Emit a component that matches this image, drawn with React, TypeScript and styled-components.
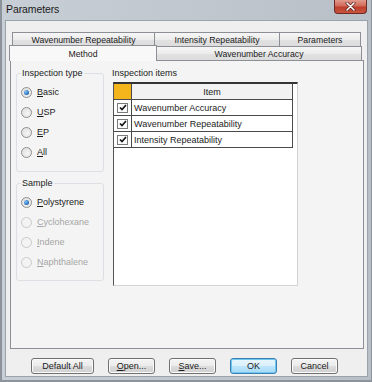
import React from "react";
import styled, { createGlobalStyle, css } from "styled-components";

const Global = createGlobalStyle`
  html, body { margin: 0; padding: 0; background: #c3c9d0; }
  * { box-sizing: border-box; }
  body { font-family: "Liberation Sans", Arial, sans-serif; font-size: 9px; color: #1b1b1b; }
`;

const Window = styled.div`
  width: 372px;
  height: 382px;
  display: flex;
  flex-direction: column;
  background: linear-gradient(90deg, #c8ced5 0%, #c0c6cd 60%, #b9bfc7 100%);
  border-left: 2px solid #8d939a;
  border-right: 1px solid #8d939a;
  border-bottom: 2px solid #8d939a;
  padding: 0 3px 3px 3px;
`;

const TitleBar = styled.div`
  height: 20px;
  flex: none;
  display: flex;
  align-items: flex-start;
  justify-content: space-between;
`;

const Title = styled.span`
  font-size: 10.5px;
  line-height: 19px;
  padding-left: 1px;
  color: #1a1a1a;
  letter-spacing: -0.1px;
`;

const CloseButton = styled.div`
  width: 33px;
  height: 14px;
  margin-right: 1px;
  border: 1px solid #6b2a24;
  border-top: none;
  border-radius: 0 0 4px 4px;
  background: linear-gradient(#e29a8c 0%, #d26a5a 45%, #bd3e2c 55%, #c9553f 100%);
  display: flex;
  align-items: center;
  justify-content: center;
`;

const Client = styled.div`
  flex: 1;
  display: flex;
  flex-direction: column;
  background: #efefef;
  border: 1px solid #9aa2ab;
  padding: 11px 3px 0 4px;
`;

const TabRow = styled.div<{ $indent: number }>`
  display: flex;
  align-items: flex-end;
  height: 14px;
  padding-left: ${(p) => p.$indent}px;
`;

const Tab = styled.div<{ $w: number; $active?: boolean }>`
  width: ${(p) => p.$w}px;
  height: 14px;
  flex: none;
  border: 1px solid #8c8f96;
  border-bottom: none;
  margin-right: -1px;
  background: linear-gradient(#f6f6f6 0%, #ececec 50%, #e2e2e2 51%, #dcdcdc 100%);
  display: flex;
  align-items: center;
  justify-content: center;
  white-space: nowrap;
  font-size: 8.7px;
  line-height: 12px;
  position: relative;
  ${(p) =>
    p.$active &&
    css`
      height: 16px;
      margin-bottom: -1px;
      margin-left: -1px;
      background: #f8f8f8;
      z-index: 2;
    `}
`;

const Panel = styled.div`
  height: 289px;
  flex: none;
  border: 1px solid #8c8f96;
  background: #f4f4f4;
  display: flex;
  gap: 8px;
  padding: 7px 0 0 5px;
  position: relative;
  z-index: 1;
`;

const LeftCol = styled.div`
  width: 88px;
  display: flex;
  flex-direction: column;
  gap: 6px;
`;

const Group = styled.fieldset`
  margin: 0;
  padding: 0;
  border: 1px solid #dcdfe3;
  border-radius: 3px;
  min-width: 0;
`;

const Legend = styled.legend`
  margin-left: 4px;
  padding: 0 1px;
  font-size: 9px;
  line-height: 11px;
  color: #1b1b1b;
`;

const RadioList = styled.div<{ $bottom: number }>`
  display: flex;
  flex-direction: column;
  padding: 3px 0 ${(p) => p.$bottom}px 4px;
`;

const RadioRow = styled.label<{ $disabled?: boolean }>`
  height: 20px;
  display: flex;
  align-items: center;
  gap: 5px;
  font-size: 9px;
  color: ${(p) => (p.$disabled ? "#a6a6a6" : "#1b1b1b")};
`;

const RadioCircle = styled.span<{ $checked?: boolean; $disabled?: boolean }>`
  width: 11px;
  height: 11px;
  border-radius: 50%;
  flex: none;
  border: 1px solid ${(p) => (p.$disabled ? "#cacaca" : "#8e8f8f")};
  background: ${(p) =>
    p.$disabled
      ? "#f3f3f3"
      : "radial-gradient(circle at 60% 60%, #f4f4f4 0%, #dcdcdc 100%)"};
  display: flex;
  align-items: center;
  justify-content: center;
  &::after {
    content: "";
    display: ${(p) => (p.$checked ? "block" : "none")};
    width: 5px;
    height: 5px;
    border-radius: 50%;
    background: radial-gradient(circle at 35% 35%, #8fc6f2 0%, #2a74c2 60%, #174f8e 100%);
  }
`;

const RightCol = styled.div`
  display: flex;
  flex-direction: column;
`;

const SectionLabel = styled.div`
  font-size: 9px;
  line-height: 11px;
  height: 11px;
  padding-left: 0;
`;

const ListBox = styled.div`
  margin-top: 3px;
  margin-left: 1px;
  width: 185px;
  height: 204px;
  background: #ffffff;
  border-top: 2px solid #333;
  border-left: 1px solid #555;
  border-right: 1px solid #d4d4d4;
  border-bottom: 1px solid #d4d4d4;
`;

const Grid = styled.div`
  width: 179px;
  display: grid;
  grid-template-columns: 18px 1fr;
  grid-auto-rows: 16px;
  border-right: 1px solid #4a4a4a;
`;

const Cell = styled.div<{ $head?: boolean; $corner?: boolean; $check?: boolean }>`
  border-bottom: 1px solid #4a4a4a;
  display: flex;
  align-items: center;
  font-size: 9px;
  white-space: nowrap;
  padding-left: 2px;
  ${(p) =>
    p.$check &&
    css`
      border-right: 1px solid #4a4a4a;
      justify-content: center;
      padding-left: 0;
    `}
  ${(p) =>
    p.$head &&
    css`
      background: #f2f2f2;
      justify-content: center;
      padding-left: 0;
    `}
  ${(p) =>
    p.$corner &&
    css`
      background: #f4b41c;
      border-right: 1px solid #4a4a4a;
    `}
`;

const CheckBox = styled.span`
  width: 11px;
  height: 10px;
  border: 1px solid #7a7a7a;
  background: #fbfbfb;
  display: flex;
  align-items: center;
  justify-content: center;
`;

const ButtonRow = styled.div`
  display: flex;
  justify-content: flex-end;
  gap: 14px;
  padding: 9px 26px 0 0;
`;

const Button = styled.button<{ $w: number; $default?: boolean }>`
  width: ${(p) => p.$w}px;
  height: 16px;
  padding: 0;
  font-family: "Liberation Sans", Arial, sans-serif;
  font-size: 9px;
  color: #1b1b1b;
  border: 1px solid #707070;
  border-radius: 3px;
  background: linear-gradient(#f4f4f4 0%, #ebebeb 50%, #dddddd 51%, #cfcfcf 100%);
  box-shadow: inset 0 0 0 1px #fbfbfb;
  ${(p) =>
    p.$default &&
    css`
      border-color: #3c7fb1;
      box-shadow: inset 0 0 0 1px #6fc8f0;
      background: linear-gradient(#eaf6fd 0%, #d9f0fc 50%, #bee6fd 51%, #a7d9f5 100%);
    `}
`;

const inspectionTypes = [
  { pre: "", key: "B", rest: "asic", checked: true },
  { pre: "", key: "U", rest: "SP" },
  { pre: "", key: "E", rest: "P" },
  { pre: "", key: "A", rest: "ll" },
];

const samples = [
  { key: "P", rest: "olystyrene", checked: true, disabled: false },
  { key: "C", rest: "yclohexane", disabled: true },
  { key: "I", rest: "ndene", disabled: true },
  { key: "N", rest: "aphthalene", disabled: true },
];

const items = ["Wavenumber Accuracy", "Wavenumber Repeatability", "Intensity Repeatability"];

const Check = () => (
  <svg width="8" height="7" viewBox="0 0 8 7">
    <path d="M1 3.5 L3 5.5 L7 1" stroke="#111" strokeWidth="1.6" fill="none" />
  </svg>
);

const CloseX = () => (
  <svg width="11" height="9" viewBox="0 0 11 9">
    <path d="M2 1 L9 8 M9 1 L2 8" stroke="#5a1e18" strokeWidth="3" strokeLinecap="round" />
    <path d="M2 1 L9 8 M9 1 L2 8" stroke="#ffffff" strokeWidth="1.6" strokeLinecap="round" />
  </svg>
);

export default function App() {
  return (
    <>
      <Global />
      <Window>
        <TitleBar>
          <Title>Parameters</Title>
          <CloseButton>
            <CloseX />
          </CloseButton>
        </TitleBar>
        <Client>
          <TabRow $indent={2}>
            <Tab $w={143}>Wavenumber Repeatability</Tab>
            <Tab $w={126}>Intensity Repeatability</Tab>
            <Tab $w={82}>Parameters</Tab>
          </TabRow>
          <TabRow $indent={0}>
            <Tab $w={148} $active>
              Method
            </Tab>
            <Tab $w={206}>Wavenumber Accuracy</Tab>
          </TabRow>
          <Panel>
            <LeftCol>
              <Group>
                <Legend>Inspection type</Legend>
                <RadioList $bottom={9}>
                  {inspectionTypes.map((r) => (
                    <RadioRow key={r.key}>
                      <RadioCircle $checked={r.checked} />
                      <span>
                        <u>{r.key}</u>
                        {r.rest}
                      </span>
                    </RadioRow>
                  ))}
                </RadioList>
              </Group>
              <Group>
                <Legend>Sample</Legend>
                <RadioList $bottom={8}>
                  {samples.map((r) => (
                    <RadioRow key={r.key} $disabled={r.disabled}>
                      <RadioCircle $checked={r.checked} $disabled={r.disabled} />
                      <span>
                        <u>{r.key}</u>
                        {r.rest}
                      </span>
                    </RadioRow>
                  ))}
                </RadioList>
              </Group>
            </LeftCol>
            <RightCol>
              <SectionLabel>Inspection items</SectionLabel>
              <ListBox>
                <Grid>
                  <Cell $corner />
                  <Cell $head>Item</Cell>
                  {items.map((it) => (
                    <React.Fragment key={it}>
                      <Cell $check>
                        <CheckBox>
                          <Check />
                        </CheckBox>
                      </Cell>
                      <Cell>{it}</Cell>
                    </React.Fragment>
                  ))}
                </Grid>
              </ListBox>
            </RightCol>
          </Panel>
          <ButtonRow>
            <Button $w={63}>Default All</Button>
            <Button $w={47}>
              <u>O</u>pen...
            </Button>
            <Button $w={47}>
              <u>S</u>ave...
            </Button>
            <Button $w={47} $default>
              OK
            </Button>
            <Button $w={47}>Cancel</Button>
          </ButtonRow>
        </Client>
      </Window>
    </>
  );
}
